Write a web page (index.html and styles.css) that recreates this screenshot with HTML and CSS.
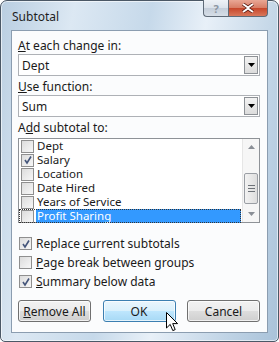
FILE: index.html
```html
<!DOCTYPE html>
<html lang="en">
<head>
  <meta charset="UTF-8">
  <title>Subtotal</title>
  <link rel="stylesheet" href="styles.css">
</head>
<body>
  <div class="window">
    <div class="titlebar">
      <span class="title">Subtotal</span>
      <div class="caption-btns">
        <span class="cap-help">?</span>
        <span class="cap-close">
          <svg width="14" height="10" viewBox="0 0 14 10">
            <path d="M2 1 L7 4.5 L12 1 M2 9 L7 5.5 L12 9" stroke="#5a1a10" stroke-width="3.4" fill="none"/>
            <path d="M2 1 L7 4.5 L12 1 M2 9 L7 5.5 L12 9" stroke="#fff" stroke-width="2" fill="none"/>
          </svg>
        </span>
      </div>
    </div>

    <div class="client">
      <div class="field-label"><u>A</u>t each change in:</div>
      <div class="combo">
        <span class="combo-text">Dept</span>
        <span class="combo-btn"><svg width="7" height="4" viewBox="0 0 7 4"><path d="M0 0 H7 L3.5 4 Z" fill="#000"/></svg></span>
      </div>

      <div class="field-label"><u>U</u>se function:</div>
      <div class="combo">
        <span class="combo-text">Sum</span>
        <span class="combo-btn"><svg width="7" height="4" viewBox="0 0 7 4"><path d="M0 0 H7 L3.5 4 Z" fill="#000"/></svg></span>
      </div>

      <div class="field-label">A<u>d</u>d subtotal to:</div>
      <div class="listbox">
        <ul class="list-items">
          <li class="list-row"><span class="cb"></span><span class="row-text">Dept</span></li>
          <li class="list-row"><span class="cb checked"><svg width="10" height="10" viewBox="0 0 10 10"><path d="M2 5 L4 8 L8 1.5" stroke="#44557a" stroke-width="1.6" fill="none"/></svg></span><span class="row-text">Salary</span></li>
          <li class="list-row"><span class="cb"></span><span class="row-text">Location</span></li>
          <li class="list-row"><span class="cb"></span><span class="row-text">Date Hired</span></li>
          <li class="list-row"><span class="cb"></span><span class="row-text">Years of Service</span></li>
          <li class="list-row focused"><span class="cb"></span><span class="row-text selected">Profit Sharing</span></li>
        </ul>
        <div class="scrollbar">
          <span class="sb-arrow"><svg width="7" height="4" viewBox="0 0 7 4"><path d="M0 4 H7 L3.5 0 Z" fill="#8a8f96"/></svg></span>
          <span class="sb-track"><span class="sb-thumb"><span class="grip"></span><span class="grip"></span><span class="grip"></span></span></span>
          <span class="sb-arrow"><svg width="7" height="4" viewBox="0 0 7 4"><path d="M0 0 H7 L3.5 4 Z" fill="#8a8f96"/></svg></span>
        </div>
      </div>

      <div class="options">
        <div class="option"><span class="cb checked"><svg width="10" height="10" viewBox="0 0 10 10"><path d="M2 5 L4 8 L8 1.5" stroke="#44557a" stroke-width="1.6" fill="none"/></svg></span><span>Replace <u>c</u>urrent subtotals</span></div>
        <div class="option"><span class="cb"></span><span><u>P</u>age break between groups</span></div>
        <div class="option"><span class="cb checked"><svg width="10" height="10" viewBox="0 0 10 10"><path d="M2 5 L4 8 L8 1.5" stroke="#44557a" stroke-width="1.6" fill="none"/></svg></span><span><u>S</u>ummary below data</span></div>
      </div>

      <div class="buttons">
        <button class="btn"><u>R</u>emove All</button>
        <button class="btn btn-default">OK</button>
        <button class="btn">Cancel</button>
      </div>
    </div>

    <svg class="cursor" width="13" height="20" viewBox="0 0 13 20">
      <path d="M0.5 0.5 L0.5 16 L4.2 12.4 L6.8 18.6 L9.2 17.6 L6.7 11.6 L11.6 11.6 Z" fill="#fff" stroke="#000" stroke-width="1"/>
    </svg>
  </div>
</body>
</html>
```

FILE: styles.css
```css
body {
  margin: 0;
  background: #fff;
  font-family: "Noto Sans", "Open Sans", sans-serif;
  font-size: 12px;
  color: #1a1a1a;
}
.window {
  position: relative;
  width: 279px;
  height: 342px;
  box-sizing: border-box;
  border: 1px solid #4b5866;
  border-radius: 7px 7px 5px 5px;
  background: linear-gradient(100deg, #b9cee1 0%, #dce8f3 22%, #c6d9ea 45%, #e8f0f8 62%, #bfd3e5 85%, #a9c2d9 100%);
  box-shadow: inset 0 0 0 1px rgba(255, 255, 255, 0.6);
  display: flex;
  flex-direction: column;
}
.titlebar {
  height: 29px;
  display: flex;
  justify-content: space-between;
  align-items: center;
  padding: 0 10px 0 11px;
}
.title {
  font-size: 12px;
  color: #1e1e1e;
  padding-top: 2px;
}
.caption-btns {
  align-self: flex-start;
  display: flex;
  margin-top: -1px;
}
.cap-help, .cap-close {
  height: 17px;
  box-sizing: border-box;
  display: flex;
  align-items: center;
  justify-content: center;
  border: 1px solid #5f6b78;
  border-top: none;
}
.cap-help {
  width: 25px;
  border-radius: 0 0 0 4px;
  border-right: none;
  background: linear-gradient(#eef2f6 0%, #dbe2ea 50%, #c4ceda 51%, #d6dee7 100%);
  color: #8c96a2;
  font-weight: bold;
  font-size: 11px;
}
.cap-close {
  width: 40px;
  border-radius: 0 0 4px 0;
  background: linear-gradient(#e9a795 0%, #d77c64 50%, #c7462a 51%, #d9785c 100%);
}
.client {
  flex: 1;
  margin: 0 10px 8px 10px;
  border: 1px solid #8b9db0;
  background: #fbfcfd;
  padding: 7px 7px 0 6px;
}
.field-label {
  line-height: 15px;
  height: 15px;
  margin-top: 3px;
}
.field-label:first-child {
  margin-top: 0;
}
.combo {
  margin-top: 1px;
  height: 22px;
  box-sizing: border-box;
  border: 1px solid #aeb1b6;
  background: #fff;
  display: flex;
  align-items: center;
  justify-content: space-between;
  padding: 0 1px 0 3px;
}
.combo-btn {
  width: 14px;
  height: 18px;
  box-sizing: border-box;
  border: 1px solid #8d9196;
  background: linear-gradient(#f3f3f3, #dcdcdc);
  display: flex;
  align-items: center;
  justify-content: center;
}
.listbox {
  margin-top: 3px;
  height: 85px;
  box-sizing: border-box;
  border: 1px solid #8e9297;
  background: #fff;
  display: flex;
}
.list-items {
  list-style: none;
  margin: 0;
  padding: 0;
  flex: 1;
}
.list-row {
  height: 14px;
  display: flex;
  align-items: center;
  padding-left: 2px;
  font-size: 11.5px;
  line-height: 14px;
}
.list-row .cb {
  margin-right: 2px;
}
.row-text {
  padding-left: 1px;
  height: 14px;
}
.row-text.selected {
  flex: 1;
  background: #3399ff;
  color: #fff;
}
.list-row.focused {
  outline: 1px dotted #333;
  outline-offset: -1px;
  margin-right: 1px;
}
.cb {
  width: 13px;
  height: 13px;
  box-sizing: border-box;
  border: 1px solid #8f8f8f;
  background: linear-gradient(135deg, #dcdcdc, #f7f7f7);
  display: inline-flex;
  align-items: center;
  justify-content: center;
  flex-shrink: 0;
}
.scrollbar {
  width: 16px;
  border-left: 1px solid #e6e6e6;
  background: #f6f6f6;
  display: flex;
  flex-direction: column;
}
.sb-arrow {
  height: 16px;
  display: flex;
  align-items: center;
  justify-content: center;
}
.sb-track {
  flex: 1;
  display: flex;
  flex-direction: column;
  justify-content: flex-end;
  padding-bottom: 2px;
}
.sb-thumb {
  height: 31px;
  margin: 0 1px;
  box-sizing: border-box;
  border: 1px solid #9a9ea4;
  border-radius: 2px;
  background: linear-gradient(90deg, #f2f2f2, #dedede);
  display: flex;
  flex-direction: column;
  align-items: center;
  justify-content: center;
  gap: 2px;
}
.grip {
  width: 7px;
  height: 1px;
  background: #6d7278;
}
.options {
  margin-top: 11px;
}
.option {
  height: 19px;
  display: flex;
  align-items: center;
  gap: 4px;
  padding-left: 1px;
}
.buttons {
  margin-top: 9px;
  display: flex;
  justify-content: space-between;
}
.btn {
  width: 73px;
  height: 22px;
  padding: 0;
  border: 1px solid #707070;
  border-radius: 3px;
  font-family: inherit;
  font-size: 12px;
  color: #1a1a1a;
  background: linear-gradient(#f2f2f2 0%, #ebebeb 50%, #dddddd 51%, #cfcfcf 100%);
  box-shadow: inset 0 0 0 1px rgba(255, 255, 255, 0.7);
}
.btn-default {
  border-color: #3c7fb1;
  background: linear-gradient(#eaf6fd 0%, #d9f0fc 50%, #bee6fd 51%, #a7d9f5 100%);
}
.cursor {
  position: absolute;
  left: 165px;
  top: 311px;
}
```
